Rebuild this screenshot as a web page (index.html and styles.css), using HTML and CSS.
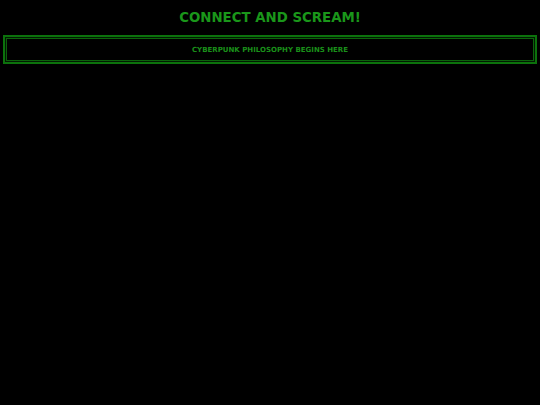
FILE: index.html
```html
<!DOCTYPE html>
<html>
<head>
<meta charset="utf-8">
<link rel="stylesheet" href="styles.css">
</head>
<body>
<div class="page">
  <h1 class="title">CONNECT AND SCREAM!</h1>
  <div class="banner">
    <p class="banner-text">CYBERPUNK PHILOSOPHY BEGINS HERE</p>
  </div>
</div>
</body>
</html>
```
FILE: styles.css
```css
html, body {
  margin: 0;
  padding: 0;
  background: #000;
}
.page {
  padding: 8px 3px;
  font-family: "DejaVu Sans", sans-serif;
}
.title {
  margin: 0;
  text-align: center;
  color: #1a961a;
  font-size: 13.33px;
  font-weight: bold;
  line-height: 19px;
}
.banner {
  margin-top: 8px;
  border: 2px solid #0c720c;
  box-shadow: inset 0 0 0 1px #021a02, inset 0 0 0 2px #0c620c;
  height: 25px;
  display: flex;
  align-items: center;
  justify-content: center;
}
.banner-text {
  margin: 0;
  color: #1a901a;
  font-size: 7px;
  font-weight: bold;
}
```
